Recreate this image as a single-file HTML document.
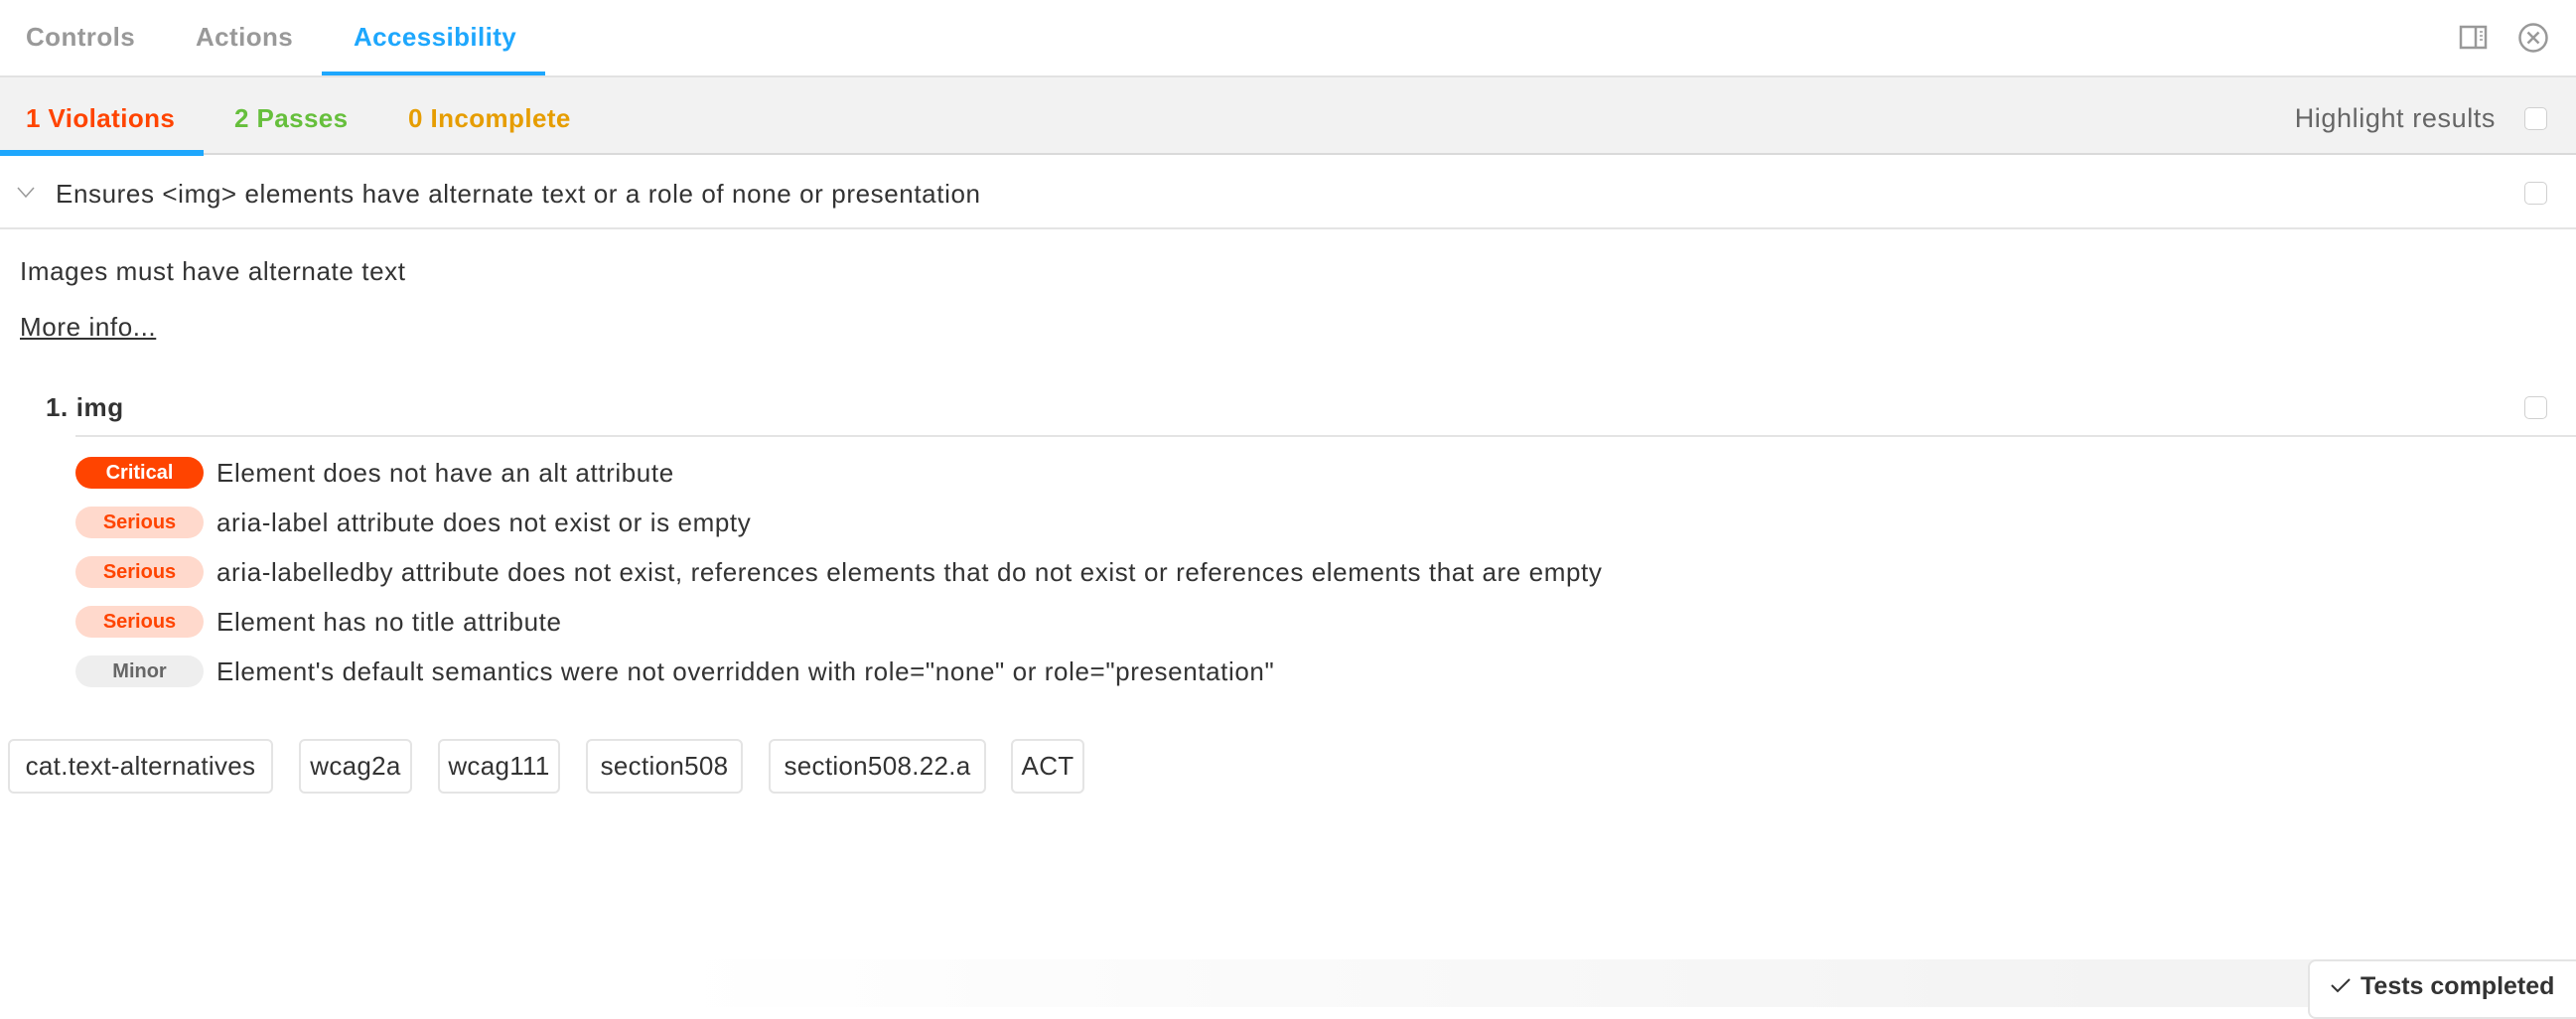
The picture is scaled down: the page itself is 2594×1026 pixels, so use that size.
<!DOCTYPE html>
<html><head><meta charset="utf-8"><style>
*{margin:0;padding:0;box-sizing:border-box}
body{width:2594px;height:1014px;overflow:hidden;background:#fff;font-family:"Liberation Sans",sans-serif;color:#333;position:relative}
.a{position:absolute;white-space:nowrap}
.t{font-size:26px;line-height:1;letter-spacing:0.6px}
.tab{font-size:26px;font-weight:bold;line-height:1;letter-spacing:0.4px}
.cb{position:absolute;width:23px;height:23px;border:1.5px solid #d0d0d0;border-radius:5px;background:#fff}
.badge{position:absolute;left:76px;width:129px;height:32px;border-radius:16px;font-size:20px;font-weight:bold;line-height:32px;text-align:center}
.tag{position:absolute;top:744px;height:55px;border:2px solid #e4e4e4;border-radius:6px;font-size:26px;line-height:51px;text-align:center;letter-spacing:0.3px}
</style></head><body>
<div class="a tab" style="left:26px;top:24px;color:#999">Controls</div>
<div class="a tab" style="left:197px;top:24px;color:#999">Actions</div>
<div class="a tab" style="left:356px;top:24px;color:#1ea7fd">Accessibility</div>
<div class="a" style="left:324px;top:72px;width:225px;height:5px;background:#1ea7fd"></div>
<svg class="a" style="left:2476px;top:25px" width="30" height="26" viewBox="0 0 30 26"><rect x="2" y="2" width="25" height="21" fill="none" stroke="#999" stroke-width="2.5"/><line x1="17" y1="2" x2="17" y2="23" stroke="#999" stroke-width="2.5"/><line x1="21" y1="7" x2="24" y2="7" stroke="#999" stroke-width="1.5"/><line x1="21" y1="11" x2="24" y2="11" stroke="#999" stroke-width="1.5"/><line x1="21" y1="15" x2="24" y2="15" stroke="#999" stroke-width="1.5"/></svg>
<svg class="a" style="left:2535px;top:22px" width="32" height="32" viewBox="0 0 32 32"><circle cx="16" cy="16" r="13.5" fill="none" stroke="#999" stroke-width="2.5"/><path d="M10.5 10.5L21.5 21.5M21.5 10.5L10.5 21.5" stroke="#999" stroke-width="2.5"/></svg>
<div class="a" style="left:0;top:76px;width:2594px;height:80px;background:#f2f2f2;border-top:2px solid #e2e2e2;border-bottom:2px solid #dadada"></div>
<div class="a tab" style="left:26px;top:106px;color:#ff4400">1 Violations</div>
<div class="a tab" style="left:236px;top:106px;color:#66bf3c">2 Passes</div>
<div class="a tab" style="left:411px;top:106px;color:#e69d00">0 Incomplete</div>
<div class="a" style="left:0;top:151px;width:205px;height:6px;background:#1ea7fd"></div>
<div class="a t" style="right:81px;top:106px;color:#666;font-size:27px">Highlight results</div>
<div class="cb" style="left:2542px;top:108px"></div>
<svg class="a" style="left:16px;top:187px" width="20" height="14" viewBox="0 0 20 14"><path d="M2 2L10 11L18 2" fill="none" stroke="#999" stroke-width="1.5"/></svg>
<div class="a t" style="left:56px;top:182px">Ensures &lt;img&gt; elements have alternate text or a role of none or presentation</div>
<div class="cb" style="left:2542px;top:183px"></div>
<div class="a" style="left:0;top:229px;width:2594px;height:2px;background:#e4e4e4"></div>
<div class="a t" style="left:20px;top:260px">Images must have alternate text</div>
<div class="a t" style="left:20px;top:316px;text-decoration:underline">More info...</div>
<div class="a t" style="left:46px;top:397px;font-weight:bold">1. img</div>
<div class="cb" style="left:2542px;top:399px"></div>
<div class="a" style="left:76px;top:438px;width:2518px;height:2px;background:#e4e4e4"></div>
<div class="badge" style="top:460px;background:#ff4400;color:#fff">Critical</div>
<div class="a t" style="left:218px;top:463px">Element does not have an alt attribute</div>
<div class="badge" style="top:510px;background:#ffd9cc;color:#ff4400">Serious</div>
<div class="a t" style="left:218px;top:513px">aria-label attribute does not exist or is empty</div>
<div class="badge" style="top:560px;background:#ffd9cc;color:#ff4400">Serious</div>
<div class="a t" style="left:218px;top:563px">aria-labelledby attribute does not exist, references elements that do not exist or references elements that are empty</div>
<div class="badge" style="top:610px;background:#ffd9cc;color:#ff4400">Serious</div>
<div class="a t" style="left:218px;top:613px">Element has no title attribute</div>
<div class="badge" style="top:660px;background:#eee;color:#666">Minor</div>
<div class="a t" style="left:218px;top:663px">Element's default semantics were not overridden with role="none" or role="presentation"</div>
<div class="tag" style="left:8px;width:267px">cat.text-alternatives</div>
<div class="tag" style="left:301px;width:114px">wcag2a</div>
<div class="tag" style="left:441px;width:123px">wcag111</div>
<div class="tag" style="left:590px;width:158px">section508</div>
<div class="tag" style="left:774px;width:219px">section508.22.a</div>
<div class="tag" style="left:1018px;width:74px">ACT</div>
<div class="a" style="left:680px;top:966px;width:1700px;height:48px;background:linear-gradient(to right,rgba(244,244,244,0),#f3f3f3 85%)"></div>
<div class="a" style="left:2324px;top:966px;width:280px;height:60px;background:#fff;border:2px solid #e4e4e4;border-radius:8px"></div>
<svg class="a" style="left:2346px;top:983px" width="22" height="18" viewBox="0 0 22 18"><path d="M2 9L8 15L20 3" fill="none" stroke="#333" stroke-width="2"/></svg>
<div class="a" style="left:2377px;top:981px;font-size:25px;font-weight:bold;line-height:1">Tests completed</div>
</body></html>
